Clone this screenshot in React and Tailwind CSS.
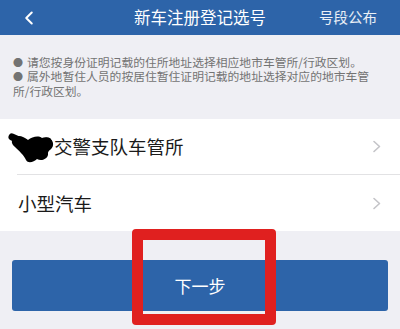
import { ChevronLeft } from "lucide-react";

const font = { fontFamily: '"Noto Sans CJK SC", "Noto Sans", sans-serif' };

function Chevron() {
  return (
    <svg width="10" height="13" viewBox="0 0 10 13" fill="none" className="shrink-0">
      <path d="M2 1.5l5.5 5-5.5 5" stroke="#c4c4c8" strokeWidth="1.6" strokeLinecap="round" strokeLinejoin="round" />
    </svg>
  );
}

// black marker scribble hiding the city name
function Scribble() {
  return (
    <svg width="48" height="36" viewBox="0 0 48 36" className="shrink-0 -ml-[10px]">
      <path
        d="M6 9 C10 5 16 8 20 11 C24 8 30 6 34 9 C38 7 44 9 45 14 C46 20 40 21 40 24 C41 29 34 33 29 30 C26 33 20 35 18 31 C16 26 11 22 7 18 C3 15 3 11 6 9 Z"
        fill="#000"
      />
      <path d="M4 8 L22 16 L40 12" stroke="#000" strokeWidth="7" strokeLinecap="round" fill="none" />
    </svg>
  );
}

function Note({ children }) {
  return (
    <p className="whitespace-nowrap">
      <span className="inline-block w-[14px] text-[10px]">●</span>
      {children}
    </p>
  );
}

export default function App() {
  return (
    <div className="relative w-[400px] h-[329px] overflow-hidden bg-[#efeff4]" style={font}>
      {/* nav bar */}
      <div className="h-[35px] bg-[#2d64a9] flex items-center px-[18px] relative">
        <ChevronLeft size={22} strokeWidth={2.2} className="text-white" />
        <div className="absolute inset-0 flex items-center justify-center text-white text-[16.5px] leading-none">
          新车注册登记选号
        </div>
        <div className="ml-auto mr-[5px] text-white/90 text-[14.5px] leading-none">号段公布</div>
      </div>

      {/* notes */}
      <div className="h-[84px] pt-[20px] pl-[13px] pr-[4px] text-[11.8px] leading-[13.4px] text-[#737373]">
        <Note>请您按身份证明记载的住所地址选择相应地市车管所/行政区划。</Note>
        <Note>
          属外地暂住人员的按居住暂住证明记载的地址选择对应的地市车管
          <br />
          所/行政区划。
        </Note>
      </div>

      {/* list */}
      <div className="bg-white">
        <div className="h-[55px] flex items-center pl-[18px] pr-[18px]">
          <Scribble />
          <span className="text-[18.5px] text-[#1a1a1a] leading-none -ml-[2px]">交警支队车管所</span>
          <span className="ml-auto"><Chevron /></span>
        </div>
        <div className="ml-[17px] h-px bg-[#e2e2e4]" />
        <div className="h-[56px] flex items-center pl-[18px] pr-[18px]">
          <span className="text-[18.5px] text-[#1a1a1a] leading-none">小型汽车</span>
          <span className="ml-auto"><Chevron /></span>
        </div>
      </div>

      {/* next button */}
      <div className="px-[12px] pt-[29px]">
        <button className="w-full h-[51px] rounded-[3px] bg-[#2d64a9] text-white text-[17px] flex items-center justify-center">
          下一步
        </button>
      </div>

      {/* red highlight annotation */}
      <div className="absolute left-[132px] top-[229px] w-[144px] h-[96px] border-[11px] border-[#e0201f] rounded-[4px]" />
    </div>
  );
}
